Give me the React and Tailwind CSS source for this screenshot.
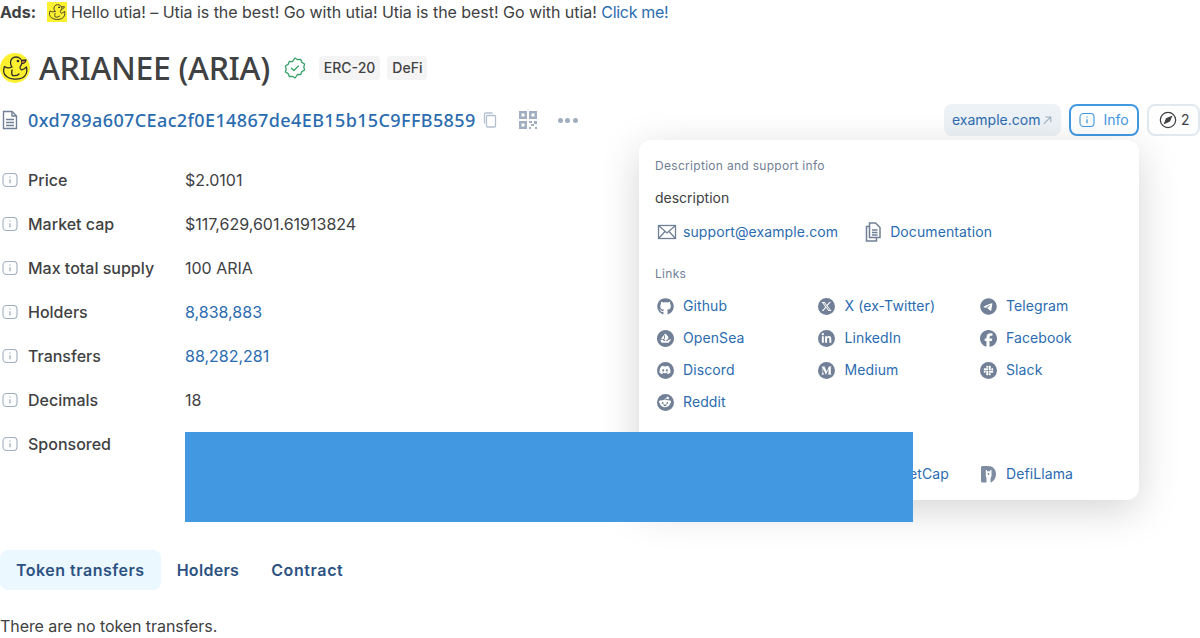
import React from "react";
import { FaGithub, FaTelegram, FaFacebook, FaLinkedinIn, FaDiscord, FaRedditAlien, FaXTwitter, FaSlack } from "react-icons/fa6";
import { FaMediumM } from "react-icons/fa";
import { SiOpensea } from "react-icons/si";

const Duck = ({ beak = true }) => (
  <svg viewBox="0 0 30 30" className="w-full h-full" fill="none" stroke="#2d2d2d" strokeWidth="1.300" strokeLinejoin="round" strokeLinecap="round">
    <path d="M12 14C10.500 12 10.500 11 10.500 9.500C10.500 6 13 4 16 4C19.500 4 22 6.500 22 9.500C22 11 21 12.500 20 14C20 15.500 20.500 16.500 21.500 17C23 16.500 25 15.500 26.500 14C27.500 19 26 23 22 25C17 27 10 26.500 6.500 23.500C3.500 21 3 17 4.500 13.500C6.500 15 9.500 15.200 12 14z" fill="#fdf02f" />
    <path d="M22 7.500L26 7C25.700 9 24.500 10.500 22 10.500" fill={beak ? "#f0883e" : "#fdf02f"} />
    <circle cx="18" cy="8" r="0.700" fill="#2d2d2d" />
    <path d="M12 17C11.500 19.500 11.500 21.500 12.500 22.500C15 23 17.500 22.500 19 21" />
  </svg>
);

const Info = ({ c = "#a0aec0", size = "w-4 h-4" }) => (
  <svg viewBox="0 0 16 16" className={size} fill="none" stroke={c} strokeWidth="1.100">
    <rect x="1" y="1.500" width="14" height="13" rx="3.500" />
    <path d="M8 7.200v4" strokeWidth="1.300" />
    <circle cx="8" cy="5" r="0.700" fill={c} stroke="none" />
  </svg>
);

const Box = ({ children }) => (
  <span className="w-5 h-5 flex items-center justify-center shrink-0">{children}</span>
);

const Round = ({ children }) => (
  <Box>
    <span className="w-[17px] h-[17px] rounded-full bg-[#718096] text-white flex items-center justify-center">{children}</span>
  </Box>
);

const Llama = () => (
  <Box>
    <svg viewBox="0 0 17 18" className="w-[17px] h-[18px]" fill="#7f8da3">
      <path d="M1 2.500C1 1.500 1.800 1 2.500 1H8c5 0 8 3.500 8 8s-3 8-5.500 8.500V13c.5-.5 1-1.400 1-3V5h-1.200v1.300H7V5H5.800v5c0 1.500.2 2 .7 2.500v5h-4c-1 0-1.500-.6-1.500-1.500z" />
      <circle cx="8.500" cy="9" r="0.900" />
    </svg>
  </Box>
);

const rows = [
  ["Price", "$2.0101"],
  ["Market cap", "$117,629,601.61913824"],
  ["Max total supply", "100 ARIA"],
  ["Holders", "8,838,883", true],
  ["Transfers", "88,282,281", true],
  ["Decimals", "18"],
];

const links = [
  ["Github", <Box><FaGithub className="w-[17px] h-[17px] text-[#718096]" /></Box>],
  ["X (ex-Twitter)", <Round><FaXTwitter className="w-[11px] h-[11px]" /></Round>],
  ["Telegram", <Box><FaTelegram className="w-[17px] h-[17px] text-[#718096]" /></Box>],
  ["OpenSea", <Box><SiOpensea className="w-[17px] h-[17px] text-[#718096]" /></Box>],
  ["LinkedIn", <Round><FaLinkedinIn className="w-[11px] h-[11px]" /></Round>],
  ["Facebook", <Box><FaFacebook className="w-[17px] h-[17px] text-[#718096]" /></Box>],
  ["Discord", <Round><FaDiscord className="w-3 h-3" /></Round>],
  ["Medium", <Round><FaMediumM className="w-[11px] h-[11px]" /></Round>],
  ["Slack", <Round><FaSlack className="w-[11px] h-[11px]" /></Round>],
  ["Reddit", <Round><FaRedditAlien className="w-3 h-3" /></Round>],
];

const Item = ({ icon, label }) => (
  <a className="flex items-center gap-2 h-5 text-[#2b6cb0] tracking-[0.1px]">
    {icon}
    <span>{label}</span>
  </a>
);

export default function App() {
  return (
    <div className="relative w-[1200px] h-[638px] overflow-hidden bg-white text-[#404142] text-base font-['Inter',sans-serif]">
      <div className="h-6 flex items-center whitespace-pre">
        <b className="font-bold">Ads:</b>
        <span className="ml-[11px] w-5 h-5 bg-[#fdf02f] mr-1"><Duck beak={false} /></span>
        <span className="tracking-[-0.04px]">Hello utia! – Utia is the best! Go with utia! Utia is the best! Go with utia! </span>
        <a className="text-[#2b6cb0] tracking-[-0.3px]">Click me!</a>
      </div>

      <div className="mt-6 h-10 flex items-center">
        <span className="w-[30px] h-[30px] rounded-full bg-[#fdf02f] overflow-hidden shrink-0"><Duck /></span>
        <h1 className="ml-[9px] text-[32px] leading-10 font-medium tracking-[-0.35px] font-['Noto_Sans',sans-serif]">ARIANEE (ARIA)</h1>
        <svg viewBox="0 0 24 24" className="ml-[13px] w-6 h-6" fill="none" stroke="#38a169" strokeWidth="1.300" strokeLinecap="round" strokeLinejoin="round">
          <path d="M12 2l2.600 1.700 3.100-.2 1.200 2.900 2.700 1.600-.8 3 .8 3-2.700 1.600-1.200 2.900-3.100-.2L12 22l-2.600-1.700-3.100.2-1.200-2.900-2.700-1.600.8-3-.8-3 2.700-1.600 1.200-2.900 3.100.2z" />
          <path d="M8.500 12.200l2.400 2.300 4.500-4.500" />
        </svg>
        <span className="ml-3 h-6 px-[5px] rounded bg-[#f4f4f5] text-sm font-medium flex items-center">ERC-20</span>
        <span className="ml-[7px] h-6 px-[5px] rounded bg-[#f4f4f5] text-sm font-medium flex items-center">DeFi</span>
      </div>

      <div className="mt-4 h-8 flex items-center">
        <svg viewBox="0 0 20 20" className="w-5 h-5 shrink-0" fill="none" stroke="#718096" strokeWidth="1.400">
          <path d="M3.500 1.500h8.500l4.500 4.500v12.500h-13z" />
          <path d="M12 1.500v4.500h4.500M6 9.500h8M6 12.500h8M6 15.500h8" />
        </svg>
        <a className="ml-2 text-lg font-medium text-[#2b6cb0] tracking-[0.38px] font-['Noto_Sans',sans-serif]">0xd789a607CEac2f0E14867de4EB15b15C9FFB5859</a>
        <svg viewBox="0 0 16 16" className="ml-[6px] w-4 h-4" fill="none" stroke="#b4c0d0" strokeWidth="1.300">
          <rect x="4.500" y="3.500" width="9" height="11.500" rx="1" />
          <path d="M2.500 11.500V2a1 1 0 0 1 1-1h7" />
        </svg>
        <svg viewBox="0 0 20 20" className="ml-5 w-5 h-5" fill="#a0aec0">
          <path fillRule="evenodd" d="M1 1h8v8H1zm2.500 2.500v3h3v-3zM11 1h8v8h-8zm2.500 2.500v3h3v-3zM1 11h8v8H1zm2.500 2.500v3h3v-3z" />
          <path d="M11 11h3v2h-3zM16 11h3v3h-3zM13 14h3v2h-3zM11 17h2v2h-2zM17 17h2v2h-2z" />
        </svg>
        <span className="ml-[18px] w-6 flex justify-between px-[2px]">
          <i className="w-[5px] h-[5px] rounded-full bg-[#a0aec0]" />
          <i className="w-[5px] h-[5px] rounded-full bg-[#a0aec0]" />
          <i className="w-[5px] h-[5px] rounded-full bg-[#a0aec0]" />
        </span>

        <div className="ml-auto flex items-center gap-2">
          <a className="h-8 w-[117px] px-2 rounded-lg bg-[#edf2f7] text-[#2b6cb0] text-sm flex items-center">
            example.com
            <svg viewBox="0 0 12 12" className="w-3 h-3 ml-[2px]" fill="none" stroke="#a0aec0" strokeWidth="1.200"><path d="M2 10.500l8-8M4 2.500h6v6" /></svg>
          </a>
          <button className="h-8 w-[70px] rounded-lg border-2 border-[#4299e1] text-[#4299e1] text-sm flex items-center justify-center gap-2 bg-white">
            <Info c="#4299e1" />
            Info
          </button>
          <button className="h-8 w-[53px] pl-[10px] rounded-lg border-2 border-[#e2e8f0] text-sm flex items-center gap-1 bg-white">
            <svg viewBox="0 0 20 20" className="w-[18px] h-[18px]" fill="none" stroke="#404142" strokeWidth="1.400">
              <circle cx="10" cy="10" r="8.500" />
              <path d="M15 5l-2.800 6.600L5 15l2.800-7z" fill="#404142" stroke="none" />
            </svg>
            2
          </button>
        </div>
      </div>

      <div className="mt-8 flex flex-col gap-5">
        {rows.map(([k, v, link]) => (
          <div key={k} className="flex h-6 items-center">
            <span className="w-[28px] shrink-0 flex pl-[2px]"><Info /></span>
            <span className="w-[157px] shrink-0 font-medium">{k}</span>
            <span className={link ? "text-[#2b6cb0]" : ""}>{v}</span>
          </div>
        ))}
        <div className="flex items-start">
          <span className="w-[28px] h-6 shrink-0 flex items-center pl-[2px]"><Info /></span>
          <span className="w-[157px] shrink-0 font-medium leading-6">Sponsored</span>
          <div className="relative z-10 w-[728px] h-[90px] bg-[#4299e1]" />
        </div>
      </div>

      <div className="mt-7 flex font-semibold text-[#2c5282]">
        <a className="h-10 px-4 rounded-lg bg-[#ebf8ff] flex items-center tracking-[0.5px]">Token transfers</a>
        <a className="h-10 px-4 rounded-lg flex items-center tracking-[0.3px]">Holders</a>
        <a className="h-10 px-4 rounded-lg flex items-center tracking-[0.6px]">Contract</a>
      </div>

      <p className="mt-6 leading-6 tracking-[-0.07px]">There are no token transfers.</p>

      <div className="absolute left-[639px] top-[140px] w-[500px] h-[360px] rounded-xl bg-white p-4 text-sm shadow-[0_10px_40px_rgba(0,0,0,0.17)]">
        <div className="text-xs leading-5 text-[#718096] tracking-[0.3px]">Description and support info</div>
        <div className="mt-3 leading-5">description</div>
        <div className="mt-[14px] flex items-center h-5">
          <Item label="support@example.com" icon={
            <svg viewBox="-2 0 20 20" className="w-5 h-5 overflow-visible" fill="none" stroke="#718096" strokeWidth="1.300"><rect x="1.500" y="3.500" width="17" height="13" /><path d="M1.500 3.500L10 11l8.500-7.500M1.500 16.500l6.500-7M18.500 16.500l-6.500-7" /></svg>
          } />
          <span className="ml-6">
            <Item label="Documentation" icon={
              <svg viewBox="0 0 20 20" className="w-5 h-5" fill="none" stroke="#718096" strokeWidth="1.500"><path d="M7.500 1h6l4.500 4.500V15.500H7.500z" /><path d="M7.500 4.500H4.500v14.500h10V15.500M10 8h5.500M10 10.500h5.500M10 13h5.500" /></svg>
            } />
          </span>
        </div>

        <div className="mt-[22px] text-xs leading-5 text-[#718096] tracking-[0.3px]">Links</div>
        <div className="mt-3 grid grid-cols-3 gap-x-[16.500px] gap-y-3">
          {links.map(([l, ic]) => <Item key={l} label={l} icon={ic} />)}
        </div>

        <div className="mt-5 text-xs leading-5 text-[#718096] tracking-[0.3px]">Crypto markets</div>
        <div className="mt-3 grid grid-cols-3 gap-x-[16.500px]">
          <Item label="CoinGecko" icon={<Round />} />
          <Item label="CoinMarketCap" icon={<Round />} />
          <Item label="DefiLlama" icon={<Llama />} />
        </div>
      </div>
    </div>
  );
}
